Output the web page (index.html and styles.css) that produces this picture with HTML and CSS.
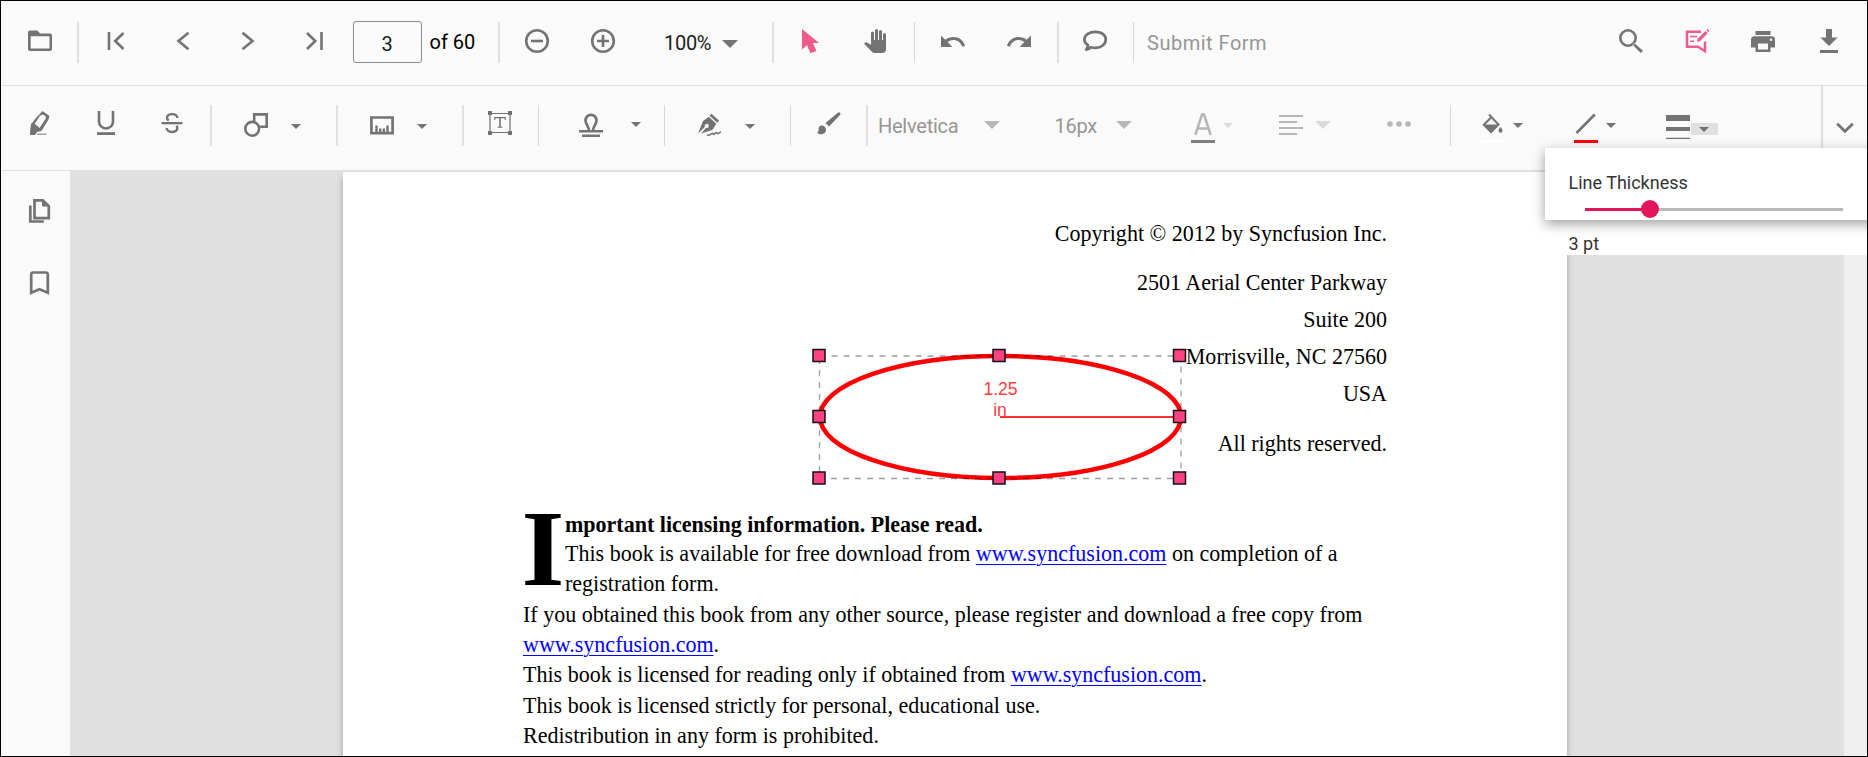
FILE: index.html
```
<!DOCTYPE html>
<html lang="en">
<head>
<meta charset="utf-8">
<title>PDF Viewer</title>
<link rel="stylesheet" href="styles.css">
</head>
<body>
<div class="viewer">
  <div class="toolbar toolbar-main">
    <svg class="icon" viewBox="0 0 24 24"><path d="M2 1.500h7.500l2.500 3h10a2 2 0 0 1 2 2V20a2 2 0 0 1-2 2H2a2 2 0 0 1-2-2V3.500a2 2 0 0 1 2-2zM2.700 7.300V19.500H21.500V7.300z" fill-rule="evenodd"/></svg>
    <i class="sep"></i>
    <svg class="icon stroke" viewBox="0 0 24 24"><path d="M5 3v18M19.500 4l-8.300 8 8.300 8"/></svg>
    <svg class="icon stroke" viewBox="0 0 24 24"><path d="M17.500 3.800L7.500 12l10 8.200"/></svg>
    <svg class="icon stroke" viewBox="0 0 24 24"><path d="M6.500 3.800l10 8.200-10 8.200"/></svg>
    <svg class="icon stroke" viewBox="0 0 24 24"><path d="M18.500 3v18M4 4l8.300 8L4 20"/></svg>
    <div class="page-input">3</div>
    <span class="label count">of 60</span>
    <i class="sep"></i>
    <svg class="icon stroke" viewBox="0 0 24 24"><circle cx="12" cy="12" r="10.800"/><path d="M6 12h12"/></svg>
    <svg class="icon stroke" viewBox="0 0 24 24"><circle cx="12" cy="12" r="10.800"/><path d="M6 12h12M12 6v12"/></svg>
    <span class="label zoom">100%</span>
    <i class="caret large zoom-caret"></i>
    <i class="sep"></i>
    <svg class="icon pink" viewBox="0 0 24 24"><path d="M3 0v20.500l5-4.300 3.500 8 6-2.200-3.700-8H20z"/></svg>
    <svg class="icon" viewBox="0 0 24 24"><path d="M23 5.500V20a4 4 0 0 1-4 4h-7.300c-1.100 0-2.100-.4-2.800-1.200L1 14.800l1.300-1.200c.4-.3 1-.4 1.500-.1L8 15.800V4a1.500 1.500 0 0 1 3 0v7h1V1.500a1.500 1.500 0 0 1 3 0V11h1V2.500a1.500 1.500 0 0 1 3 0V11h1V5.500a1.500 1.500 0 0 1 3 0z"/></svg>
    <i class="sep thin"></i>
    <svg class="icon" viewBox="0 0 24 24"><path d="M0 6.500l4.400 4.300C6.500 9 9.300 8 12.500 8c5.300 0 9.800 3.300 11.500 8.700l-2.900 1C19.800 13.700 16.500 11 12.500 11c-2.200 0-4.300.8-5.900 2.100L11.300 18H0z"/></svg>
    <svg class="icon" viewBox="0 0 24 24"><path d="M24 6.500l-4.400 4.300C17.500 9 14.700 8 11.500 8 6.200 8 1.700 11.300 0 16.700l2.900 1C4.200 13.700 7.500 11 11.500 11c2.200 0 4.300.8 5.900 2.100L12.700 18H24z"/></svg>
    <i class="sep"></i>
    <svg class="icon" viewBox="0 0 24 24"><path d="M12.500 2.800C6.500 2.800 1.400 6 1.400 10.500c0 2.400 1.400 4.300 3.600 5.600-.3 1.700-.8 3-1.800 4.600 2.200-.1 3.500-1 4.700-2.500 1.400.4 3 .6 4.600.6 5.700 0 10.300-3.500 10.300-8.200s-4.600-7.800-10.300-7.800z" fill="none" stroke="currentColor" stroke-width="2.700" stroke-linejoin="round"/></svg>
    <i class="sep thin"></i>
    <span class="label muted submit">Submit Form</span>
    <svg class="icon" viewBox="0 0 24 24"><path d="M15.500 14.200L24 21.700 21.700 24l-8-8.300M9 0a9 9 0 1 1 0 18A9 9 0 0 1 9 0zm0 2.600a6.400 6.400 0 1 0 0 12.800A6.400 6.400 0 0 0 9 2.600z" fill-rule="evenodd"/></svg>
    <svg class="icon pink" viewBox="0 0 24 24"><path d="M16 2.800H2v15h11l7 4.500V12.500" fill="none" stroke="currentColor" stroke-width="2.500"/><path d="M5 7.500h7M5 12.300h4" stroke="currentColor" stroke-width="1.500"/><path d="M12 13l.6-3.200L20.500 2l2.200 2.200-7.800 8zM21.400 1.200l1-1.200L24.500 2l-1.100 1.300z"/></svg>
    <svg class="icon" viewBox="0 0 24 24"><path d="M4.500 2h15v4h-15zM3.500 7.200h17A3.500 3.500 0 0 1 24 10.700v7.700h-4.500V23h-15v-4.600H0v-7.700a3.500 3.500 0 0 1 3.500-3.500zM7 14.500v6h10v-6zM20 9.500a1.300 1.300 0 1 0 0 2.600 1.300 1.300 0 0 0 0-2.600z" fill-rule="evenodd"/></svg>
    <svg class="icon" viewBox="0 0 24 24"><path d="M9 0h6v8.500h5.500L12 17 3.500 8.500H9zM3 21h18v3H3z"/></svg>
  </div>

  <div class="toolbar toolbar-annotate">
    <svg class="icon up2" viewBox="0 0 24 24"><path d="M14.500 0l7 5-1 3.500-7 11.500-4.500 1-2 3H2l1-10.500 4.500-6zM15 3.500l-3 1.300L6.500 13l5 4L17.800 7.500v-2z" fill-rule="evenodd"/><path d="M3.200 12.500l4 1 5 4-4.200 3L6.500 24H2z"/><path d="M9 23.200h9.500" stroke="currentColor"/></svg>
    <svg class="icon up2" viewBox="0 0 24 24"><path d="M5 0v10.500a7 7 0 0 0 14 0V0" fill="none" stroke="currentColor" stroke-width="2.600"/><path d="M3 21.200h18V24H3z"/></svg>
    <svg class="icon up2" viewBox="0 0 24 24"><path d="M1.500 11h21v2.300h-21z"/><path d="M17.300 7c0-2.200-2-3.900-5-3.900S7 4.600 7 6.700c0 1.200.6 2.100 1.700 2.800M6.700 17c0 2.300 2.200 4 5.300 4 3.200 0 5.300-1.600 5.300-3.900 0-.9-.3-1.700-.9-2.400" fill="none" stroke="currentColor" stroke-width="2.400"/></svg>
    <i class="sep"></i>
    <svg class="icon" viewBox="0 0 24 24"><path d="M10.200 8.200V1.400h12.500v12.400h-6.600" fill="none" stroke="currentColor" stroke-width="2.600"/><circle cx="8.200" cy="15.800" r="6.900" fill="none" stroke="currentColor" stroke-width="2.600"/></svg>
    <i class="caret low"></i>
    <i class="sep"></i>
    <svg class="icon" viewBox="0 0 24 24"><path d="M1.400 4.500h21.200v15.700H1.400z" fill="none" stroke="currentColor" stroke-width="2.700"/><path d="M6.500 19v-6.500M17.500 19v-6.500M10.200 19v-3.500M13.800 19v-3.500" stroke="currentColor" stroke-width="2.400"/></svg>
    <i class="caret low"></i>
    <i class="sep"></i>
    <svg class="icon up2" viewBox="0 0 24 24"><path d="M2 2.500h20v19H2z" fill="none" stroke="currentColor" stroke-width="1.200"/><path d="M0 0h4v4H0zM20 0h4v4h-4zM0 20h4v4H0zM20 20h4v4h-4zM6.200 6h11.600v3h-.9l-.4-1.800h-3.700v8.600h1.700v1H9.500v-1h1.700V7.200H7.500L7.100 9h-.9z"/></svg>
    <i class="sep thin"></i>
    <svg class="icon" viewBox="0 0 24 24"><path d="M0 17h24v2.500H0zM3 21.500h18V24H3z"/><path d="M10 18c0-5-3.500-6.500-3.500-10.500A5.500 5.500 0 0 1 12 1.800a5.500 5.500 0 0 1 5.500 5.700c0 4-3.500 5.500-3.500 10.500" fill="none" stroke="currentColor" stroke-width="2.700"/></svg>
    <i class="caret high"></i>
    <i class="sep thin"></i>
    <svg class="icon" viewBox="0 0 24 24"><path d="M13.500.8l7.600 7-1.900 2-7.600-7zM10.800 3.800l7.500 6.900-4 6.300L3 20.500l5.200-5.700a2 2 0 1 0-1.200-1L0 20.800 5 8z"/><path d="M9 22c2 .5 3.500 0 4.500-1.200.8-.8 1.300-.5 1.500.2.300.8 1 .8 1.700-.2 1.200-1.600 2-1.600 2.300-.6.400 1 1.200.8 2-.2.600-.8 1.200-.9 2-.7" fill="none" stroke="currentColor" stroke-width="1.500"/></svg>
    <i class="caret low"></i>
    <i class="sep thin"></i>
    <svg class="icon brush" viewBox="0 0 24 24"><path d="M20.800.7a1.500 1.500 0 0 1 2.200 2.200L12 14.500 8.500 11zM4.500 13.500c2.500 0 4.500 1.800 4.500 4.200 0 3-2.500 4.500-5 4.500-1.700 0-3-.6-4-1.500 1.200-.4 1.500-1.500 1.500-3 0-2.400 1-4.200 3-4.200z"/></svg>
    <i class="sep"></i>
    <span class="label muted">Helvetica</span>
    <i class="caret large dim"></i>
    <span class="label muted">16px</span>
    <i class="caret large dim"></i>
    <div class="color-tool font-color"><svg class="icon faded" viewBox="0 0 24 24"><path d="M4.300 22L11 1.500h2L19.700 22M6.500 15.500h11" fill="none" stroke="currentColor" stroke-width="2.500"/></svg></div>
    <i class="caret faint"></i>
    <svg class="icon faded" viewBox="0 0 24 24"><path d="M0 2h24v2H0zM0 8h18v2H0zM0 14h24v2H0zM0 20h18v2H0z"/></svg>
    <i class="caret large faint"></i>
    <svg class="icon faded" viewBox="0 0 24 24"><circle cx="3" cy="11" r="2.800"/><circle cx="12" cy="11" r="2.800"/><circle cx="21" cy="11" r="2.800"/></svg>
    <i class="sep thin"></i>
    <div class="color-tool fill-color"><svg class="icon" viewBox="0 0 24 24"><path d="M8 1.500l9.500 10L10 19 2.800 11.800l7.500-7.500" fill="none" stroke="currentColor" stroke-width="2"/><path d="M3 11.500h15L10 19.800zM19.500 14c1.200 1.500 2 2.500 2 3.700a2 2 0 0 1-4 0c0-1.200.8-2.200 2-3.700z"/></svg></div>
    <i class="caret"></i>
    <div class="color-tool stroke-color"><svg class="icon stroke" viewBox="0 0 24 24"><path d="M2.500 20L20.800 1.500"/></svg></div>
    <i class="caret"></i>
    <svg class="icon thickness" viewBox="0 0 24 24"><path d="M0 0h24v6H0zM0 12h24v4H0zM0 22.700h24v1.300H0z"/></svg>
    <div class="thickness-toggle"><i class="caret"></i></div>
    <div class="collapse"><svg viewBox="0 0 18 12"><path d="M1.200 1.800L9 9.200l7.800-7.400"/></svg></div>
  </div>

  <div class="body">
    <div class="sidebar">
      <svg class="icon" viewBox="0 0 24 24"><path d="M7.500 1.400h8.300l6 5.700v12H7.500z" fill="none" stroke="currentColor" stroke-width="2.700"/><path d="M15 1.500l7 6h-7z"/><path d="M3.300 6.500v16h13.500" fill="none" stroke="currentColor" stroke-width="2.700"/></svg>
      <svg class="icon" viewBox="0 0 24 24"><path d="M4.200 21.700V3.500a2 2 0 0 1 2-2h12.600a2 2 0 0 1 2 2v18.200L12.500 18.200z" fill="none" stroke="currentColor" stroke-width="2.700"/></svg>
    </div>
    <div class="canvas">
      <div class="page">
        <div class="credits">
          <p>Copyright © 2012 by Syncfusion Inc.</p>
          <p>2501 Aerial Center Parkway</p>
          <p>Suite 200</p>
          <p>Morrisville, NC 27560</p>
          <p>USA</p>
          <p>All rights reserved.</p>
        </div>
        <div class="intro">
          <div class="dropcap">I</div>
          <div class="intro-text">
            <p class="strong">mportant licensing information. Please read.</p>
            <p>This book is available for free download from <a>www.syncfusion.com</a> on completion of a</p>
            <p>registration form.</p>
          </div>
        </div>
        <div class="license">
          <p>If you obtained this book from any other source, please register and download a free copy from</p>
          <p><a>www.syncfusion.com</a>.</p>
          <p>This book is licensed for reading only if obtained from <a>www.syncfusion.com</a>.</p>
          <p>This book is licensed strictly for personal, educational use.</p>
          <p>Redistribution in any form is prohibited.</p>
        </div>
        <svg class="annotation" viewBox="0 0 380 140">
          <ellipse cx="190.500" cy="71" rx="180.500" ry="61" fill="none" stroke="#f00" stroke-width="4.500"/>
          <path d="M190 71h180" stroke="#ff3030" stroke-width="2"/>
          <text x="190.500" y="49">1.25</text>
          <text x="190" y="70">in</text>
          <path class="bounds" d="M9.500 10h361.500v122.500H9.500z"/>
          <g class="handles">
            <rect x="3" y="3.500" width="12" height="12"/><rect x="183" y="3.500" width="12" height="12"/><rect x="363.500" y="3.500" width="12" height="12"/>
            <rect x="3" y="64.500" width="12" height="12"/><rect x="363.500" y="64.500" width="12" height="12"/>
            <rect x="3" y="126" width="12" height="12"/><rect x="183" y="126" width="12" height="12"/><rect x="363.500" y="126" width="12" height="12"/>
          </g>
        </svg>
      </div>
      <div class="scrollbar"></div>
    </div>
  </div>

  <div class="popup-backing"></div>
  <div class="popup">
    <div class="popup-title">Line Thickness</div>
    <div class="slider"><div class="slider-fill"></div><div class="slider-thumb"></div></div>
    <div class="popup-value">3 pt</div>
  </div>
</div>
</body>
</html>
```
FILE: styles.css
```
* { box-sizing: border-box; }
body { margin: 0; }
p { margin: 0; }

.viewer {
  position: relative;
  display: flex;
  flex-direction: column;
  width: 1868px;
  height: 757px;
  border: 1px solid #000;
  overflow: hidden;
  background: #fafafa;
  font-family: Roboto, sans-serif;
  font-size: 20px;
  color: #1c1c1c;
}

.toolbar {
  display: grid;
  align-items: center;
  height: 85px;
  flex: none;
  border-bottom: 1px solid #e0e0e0;
  color: #737373;
}
.toolbar-main {
  padding-left: 26.500px;
  padding-bottom: 4px;
  grid-template-columns: 49.500px 26.500px 67px 65px 67.500px 49.500px 77px 68px 27px 66px 73.500px 57.500px 50px 27.500px 64px 51px 26.500px 66.500px 49.500px 26.500px 50px 14px 471.500px 66px 66.500px 65.500px 30px;
}
.toolbar-annotate {
  padding-left: 27px;
  grid-template-columns: 65.500px 66px 50px 34px 47.500px 44.500px 34px 47px 45px 26px 50px 41px 52px 33px 34px 47.500px 45px 26.500px 49.500px 12px 105.500px 71px 61px 75px 32px 56px 36.500px 71.500px 63.500px 30.500px 32px 61px 32px 60px 25px 130px 46px;
}

.icon { display: block; width: 24px; height: 24px; fill: currentColor; overflow: visible; }
.icon.stroke { fill: none; stroke: currentColor; stroke-width: 2.600px; }
.icon.pink { color: #ec5b8c; }
.icon.faded { color: #b7b7b7; }
.icon.up2 { margin-top: -5px; }
.icon.brush { margin-top: -3px; }
.icon.thickness { margin-top: 4px; }

.sep { width: 2px; height: 41px; background: #e0e0e0; margin-top: 2px; }
.sep.thin { width: 1px; background: #d8d8d8; }
.toolbar-annotate .sep { margin-top: -6px; }
.toolbar-annotate .icon, .toolbar-annotate .label { transform: translateY(-3px); }
.toolbar-annotate .label { margin-top: 1px; letter-spacing: -.25px; }

.caret {
  width: 0;
  height: 0;
  border: 5.750px solid transparent;
  border-top: 5.750px solid #737373;
  border-bottom: 0;
  margin-top: -6px;
}
.caret.low { margin-top: -3px; }
.caret.high { margin-top: -7px; }
.caret.large { border-width: 8.500px 8.300px 0; }
.caret.large.zoom-caret { margin-top: 5px; }
.caret.dim { border-top-color: #b7b7b7; }
.caret.faint { border-top-color: #dadada; }

.label { white-space: nowrap; line-height: 24px; }
.toolbar-main .label { color: #1c1c1c; }
.toolbar-main .label.count { margin-top: 2px; color: #000; }
.toolbar-main .label.zoom { margin-top: 4px; letter-spacing: -.3px; }
.toolbar-main .label.submit { margin-top: 4px; letter-spacing: .5px; }
.toolbar .label.muted { color: #969696; }

.page-input {
  width: 69px;
  height: 42px;
  margin-top: 2px;
  border: 1px solid #8c8c8c;
  border-radius: 3px;
  text-align: center;
  line-height: 44px;
  color: #1c1c1c;
}

.color-tool { width: 24px; height: 30px; margin-top: -1px; border-bottom: 3px solid; }
.font-color { border-color: #7f7f7f; }
.fill-color { border-color: #fff; }
.stroke-color { border-color: #f00; }
.color-tool .icon { transform: none; }

.thickness-toggle {
  display: grid;
  place-items: center;
  width: 27px;
  height: 12px;
  background: #e0e0e0;
  margin-top: 2px;
}
.thickness-toggle .caret { margin: 0; }
.collapse {
  display: grid;
  place-items: center;
  height: 84px;
  border-left: 2px solid #e0e0e0;
}
.collapse svg { width: 18px; height: 12px; fill: none; stroke: #737373; stroke-width: 2.800px; }

.body { display: flex; flex: 1; min-height: 0; }
.sidebar {
  display: flex;
  flex-direction: column;
  gap: 48px;
  width: 69px;
  padding: 28px 0 0 26px;
  color: #737373;
}
.canvas {
  display: flex;
  justify-content: space-between;
  flex: 1;
  padding-left: 273px;
  background: #e0e0e0;
  overflow: hidden;
}
.scrollbar { width: 23px; background: #f0f0f0; }

.page {
  position: relative;
  width: 1224px;
  height: 900px;
  margin-top: 1px;
  background: #fff;
  box-shadow: 0 6px 6px rgba(0, 0, 0, .3);
  font: 22.030px/30.330px "Liberation Serif", serif;
  color: #000;
  white-space: nowrap;
}
.credits { padding: 42.500px 180px 0 0; line-height: 37.200px; text-align: right; }
.credits p:nth-child(2) { margin-top: 12px; }
.credits p:nth-child(6) { margin-top: 12px; }
.intro { display: grid; grid-template-columns: 42px auto; padding: 48.200px 0 0 180px; }
.dropcap { width: 41px; height: 85px; margin: -6px 0 0 -1px; font-size: 107px; font-weight: bold; line-height: 90px; transform: scaleX(1.030); }
.intro .strong { font-weight: bold; line-height: 29px; }
.license { padding-left: 180px; }
.page a { color: #00f; text-decoration: underline; text-decoration-thickness: 1px; text-underline-offset: 3px; }

.annotation { position: absolute; left: 467px; top: 174px; width: 380px; height: 140px; overflow: visible; }
.annotation text { font: 17.600px "Liberation Sans", sans-serif; fill: #ff4040; text-anchor: middle; }
.bounds { fill: none; stroke: rgba(0, 0, 0, .38); stroke-width: 1.300px; stroke-dasharray: 6 6; }
.handles rect { fill: #ff4081; stroke: #111; stroke-width: 1.500px; }

.popup-backing { position: absolute; left: 1566px; top: 170px; width: 300px; height: 84px; background: #fff; }
.popup {
  position: absolute;
  left: 1544px;
  top: 147px;
  width: 340px;
  height: 72px;
  padding: 24px 0 0 23.500px;
  background: #fff;
  box-shadow: 0 4px 12px rgba(0, 0, 0, .38);
  font-size: 18px;
  line-height: 22px;
  color: #333;
}
.slider { position: relative; width: 258px; height: 3px; margin: 14px 0 0 16.500px; background: #b9b9b9; }
.slider-fill { width: 65px; height: 3px; background: #e3165b; }
.slider-thumb { position: absolute; left: 56px; top: -8px; width: 18px; height: 18px; border-radius: 50%; background: #e3165b; }
.popup-value { margin-top: 22px; }
```
